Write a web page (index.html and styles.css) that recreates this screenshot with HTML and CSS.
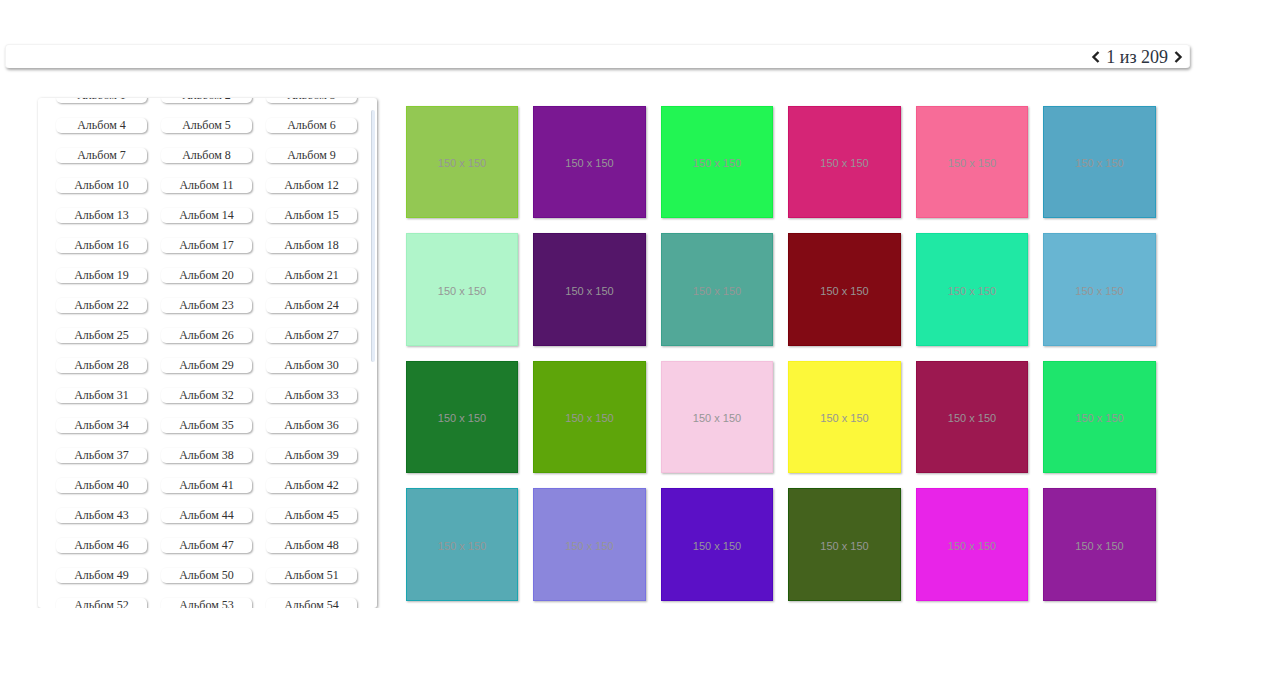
FILE: index.html
```html
<!DOCTYPE html>
<html lang="ru">
<head>
<meta charset="utf-8">
<title>Альбомы</title>
<link rel="stylesheet" href="styles.css">
</head>
<body>
<header class="topbar">
  <div class="pager">
    <svg class="chev" width="10" height="14" viewBox="0 0 10 14"><polyline points="7.5,2 2.5,7 7.5,12" fill="none" stroke="#222" stroke-width="2.4"/></svg>
    <span class="pager-text">1 из 209</span>
    <svg class="chev" width="10" height="14" viewBox="0 0 10 14"><polyline points="2.5,2 7.5,7 2.5,12" fill="none" stroke="#222" stroke-width="2.4"/></svg>
  </div>
</header>
<main class="main">
  <aside class="albums">
    <div class="album-scroll" id="albums">
      <div class="album-grid" id="albumGrid"></div>
    </div>
    <div class="scroll-thumb"></div>
  </aside>
  <section class="photos">
    <div class="photo" style="background:#93c853;border-color:#86cc33">150 x 150</div>
    <div class="photo" style="background:#7a1892;border-color:#6e0c8c">150 x 150</div>
    <div class="photo" style="background:#22f553;border-color:#12ee44">150 x 150</div>
    <div class="photo" style="background:#d52576;border-color:#cc1368">150 x 150</div>
    <div class="photo" style="background:#f76c98;border-color:#f55a8c">150 x 150</div>
    <div class="photo" style="background:#56a7c4;border-color:#2b9bbd">150 x 150</div>

    <div class="photo" style="background:#b0f5ca;border-color:#9ff0be">150 x 150</div>
    <div class="photo" style="background:#541669;border-color:#4b0a62">150 x 150</div>
    <div class="photo" style="background:#52a898;border-color:#3aa08c">150 x 150</div>
    <div class="photo" style="background:#820a14;border-color:#78000b">150 x 150</div>
    <div class="photo" style="background:#20e8a4;border-color:#10e09a">150 x 150</div>
    <div class="photo" style="background:#68b5d2;border-color:#55accc">150 x 150</div>

    <div class="photo" style="background:#1c7b2b;border-color:#0f7020">150 x 150</div>
    <div class="photo" style="background:#5ea50a;border-color:#4fa000">150 x 150</div>
    <div class="photo" style="background:#f7cde4;border-color:#f3c0dc">150 x 150</div>
    <div class="photo" style="background:#fcf83a;border-color:#f8f420">150 x 150</div>
    <div class="photo" style="background:#9c1850;border-color:#920c45">150 x 150</div>
    <div class="photo" style="background:#1ee56c;border-color:#0edf5e">150 x 150</div>

    <div class="photo" style="background:#56aab4;border-color:#1aa5b0">150 x 150</div>
    <div class="photo" style="background:#8b86dc;border-color:#7872e0">150 x 150</div>
    <div class="photo" style="background:#5b10c6;border-color:#5005c0">150 x 150</div>
    <div class="photo" style="background:#44621d;border-color:#1f5a08">150 x 150</div>
    <div class="photo" style="background:#e824e8;border-color:#e414e4">150 x 150</div>
    <div class="photo" style="background:#901f9b;border-color:#861292">150 x 150</div>
  </section>
</main>
<script src="script.js"></script>
</body>
</html>
```

FILE: styles.css
```css
html, body {
  margin: 0;
  padding: 0;
  background: #fff;
}

body {
  font-family: "Liberation Serif", "Times New Roman", serif;
  color: #333;
}

.topbar {
  margin: 44px 73px 0 5px;
  height: 24px;
  border: 1px solid #f3f3f3;
  border-bottom: none;
  border-radius: 4px;
  box-shadow: 1px 2px 3px rgba(0, 0, 0, 0.35);
  display: flex;
  justify-content: flex-end;
  align-items: center;
  box-sizing: border-box;
  padding-right: 6px;
}

.pager {
  display: flex;
  align-items: center;
  gap: 5px;
}

.chev {
  display: block;
}

.pager-text {
  font-size: 18px;
  line-height: 22px;
  color: #2d3440;
}

.main {
  display: flex;
  align-items: flex-start;
  margin: 30px 0 0 38px;
}

.albums {
  position: relative;
  width: 339px;
  height: 510px;
  flex: none;
  border-radius: 3px;
  box-shadow: 1px 1px 3px rgba(0, 0, 0, 0.4);
  background: #fff;
}

.album-scroll {
  height: 100%;
  overflow: hidden;
}

.scroll-thumb {
  position: absolute;
  right: 2px;
  top: 12px;
  width: 3px;
  height: 252px;
  background: #e4ecf7;
  border-left: 1px solid #cdd6e1;
  border-radius: 2px;
}

.album-grid {
  display: grid;
  grid-template-columns: repeat(3, 91px);
  column-gap: 14px;
  row-gap: 15px;
  padding: 14px 0 14px 18px;
}

.album {
  height: 15px;
  border-radius: 5px;
  box-shadow: 1px 1px 2px rgba(0, 0, 0, 0.35);
  background: #fff;
  font-size: 12px;
  line-height: 15px;
  text-align: center;
  color: #333;
  white-space: nowrap;
}

.photos {
  margin: 7.75px 0 0 28.75px;
  display: grid;
  grid-template-columns: repeat(6, 112.5px);
  column-gap: 15px;
  row-gap: 15px;
}

.photo {
  height: 112.5px;
  box-sizing: border-box;
  padding-top: 2px;
  border: 1px solid transparent;
  box-shadow: 1px 1px 2px rgba(0, 0, 0, 0.3);
  display: flex;
  align-items: center;
  justify-content: center;
  font-family: "Liberation Sans", Arial, sans-serif;
  font-size: 11px;
  color: #969696;
}
```

FILE: script.js
```js
(function () {
  var grid = document.getElementById('albumGrid');
  var html = '';
  for (var i = 1; i <= 102; i++) {
    html += '<div class="album">Альбом ' + i + '</div>';
  }
  grid.innerHTML = html;
  document.getElementById('albums').scrollTop = 24;
})();
```
